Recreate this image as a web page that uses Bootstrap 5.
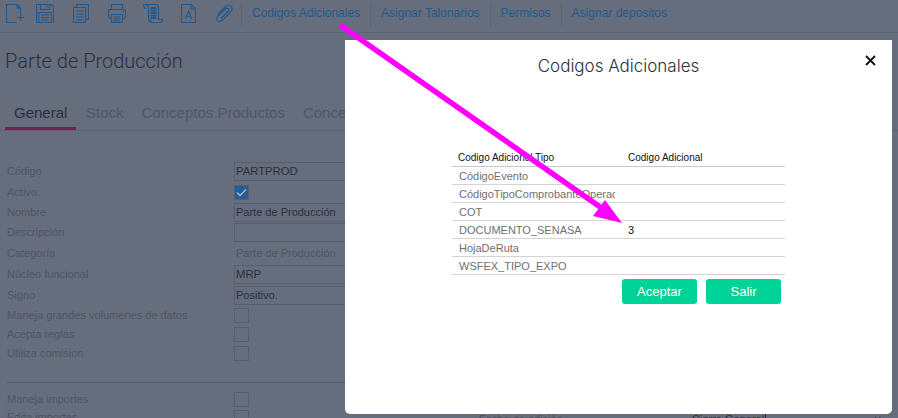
<!DOCTYPE html>
<html lang="es"><head><meta charset="utf-8">
<link href="https://cdn.jsdelivr.net/npm/bootstrap@5.3.0/dist/css/bootstrap.min.css" rel="stylesheet">
<style>
html,body{width:898px;height:418px;overflow:hidden}
body{background:#666d7c;font-family:"Liberation Sans",Arial,sans-serif;position:relative;color:#2b3040}
.topbar{height:33px;border-bottom:1px solid #5d6473;padding:3px 0 0 6px}
.ticon{height:19px;display:block;flex:none;margin-top:1px;fill:none;stroke:#20598f;stroke-width:1.1}
.ticon .hv{stroke-width:2}
.i1{width:18px}.i2{width:18px;margin-left:12px}.i3{width:16px;margin-left:19px}.i4{width:18px;margin-left:19px}
.i5{width:20px;margin-left:17px}.i6{width:15px;margin-left:18px}.i7{width:17px;margin-left:20px;margin-right:8px}
.tlink{font-size:12px;color:#235a8d;padding:0 10px;height:24px;line-height:21px;border-left:1px solid #5e6574;text-decoration:none}
.ptitle{font-family:Roboto,sans-serif;font-weight:300;font-size:20px;color:#2b3040;margin:14px 0 0 5px;line-height:28px}
.tabsbar{margin-top:27px;height:29px;border-bottom:1px solid #5d6473;padding-left:5px;font-size:15px}
.tabx{padding:0 8px 0 10px;line-height:22px;height:28px;color:#515766;white-space:nowrap}
.tabx.on{color:#2b3040;border-bottom:3px solid #7a1f4d;width:71px;padding-left:9px}
.frm{margin:30px 0 0 7px;font-size:11px;color:#4f5564;width:338px;overflow:hidden}
.frow{display:flex;align-items:center}
.h18{height:18px}.h19{height:19px}.h20{height:20px}.h21{height:21px}
.flab{width:227px;flex:none;line-height:13px}
.finp{width:120px;flex:none;height:19px;border:1px solid #575e6d;color:#2b3040;padding-left:1px;line-height:17px;white-space:nowrap}
.ftx{font-size:11.3px}
.fplain{width:120px;flex:none;padding-left:2px;line-height:17px}
.fchk{width:15px;height:15px;flex:none;border:1px solid #575e6d}
.fchk.yes{background:#235d97;display:flex;align-items:center;justify-content:center}
.frule{border-top:1px solid #555b6a;height:0;margin-top:19px;margin-bottom:7px}
.dlg{position:absolute;left:345px;top:40px;width:547px;height:374px;background:#fff;border-radius:0 0 5px 5px}
.dtitle{font-family:Inter,sans-serif;font-size:17px;font-weight:300;color:#2b3040;text-align:center;line-height:24px;margin-top:14px}
.xbtn{position:absolute;left:519px;top:14px;width:13px;height:13px;display:block}
.tblwrap{width:333px;margin:72px 0 0 107px}
.ctbl{width:333px;table-layout:fixed;border-collapse:collapse;margin:0}
.ctbl th{font-weight:400;font-size:10px;color:#111;height:16px;padding:1px 6px 0;border-bottom:1px solid #c9c9c9;white-space:nowrap;line-height:14px}
.ctbl td{height:18px;padding:1px 7px 0 7px;font-size:11px;border-bottom:1px solid #d4d4d4;color:#6f6f6f;line-height:14px}
.ctbl td.v{color:#111;padding-left:6px}
.cellclip{white-space:nowrap;overflow:hidden}
.col1{width:170px}
.acts{gap:9px;margin-top:4px;padding-right:4px}
.gbtn{width:75px;height:25px;padding:0;background:#00d398;border:0;border-radius:3px;color:#fff;font-size:13px;line-height:25px}
.gbtn:hover{background:#00d398;color:#fff}
.arw{position:absolute;left:0;top:0;width:898px;height:418px;pointer-events:none}
.underlay{position:absolute;font-size:11px;line-height:13px;color:#4a5060;white-space:nowrap;top:413px}
.ux1{left:479px}
.ux2{left:692px;color:#2b3040;padding-right:1px;border-right:1px solid #2b3040}
.ux3{left:875px;color:#2b3040}
</style></head><body>
<div class="topbar d-flex align-items-start">
 <svg class="ticon i1" viewBox="0 0 18 19"><path d="M14.500 10V4L11 .5H.5V18.500H10.500M11 .5V4H14.500M14.700 10v7M11 13.500h7"/></svg>
 <svg class="ticon i2" viewBox="0 0 18 19"><path d="M.5.5H15.500L17.500 2.500V18.500H.5zM4.500.5V5.500H14V.5M10.500 2h1.500v2M2.800 18.500V8.500H15.200V18.500M5 11h8M5 13.500h8M5 16h8"/></svg>
 <svg class="ticon i3" viewBox="0 0 16 19"><path d="M3.500 3V.5H15.500V15.500H12.500M.5 3.500H12.500V18.500H.5zM3 7h7.500M3 10h7.500M3 13h7.500M3 16h7.500"/></svg>
 <svg class="ticon i4" viewBox="0 0 18 19"><path d="M3.500 5.500V.5H14.500V5.500M3.500 14.500H1.500L.5 13.500V6.500L1.500 5.500H16.500L17.500 6.500V13.500L16.500 14.500H14.500M3.500 10.500H14.500V18.500H3.500zM5.500 13h7M5.500 15h7M5.500 17h7M14.500 7.500h1.500"/></svg>
 <svg class="ticon i5" viewBox="0 0 20 19"><path d="M.5 .5H13C15 .5 15.500 2 15.500 4V15.500H19.500C19.500 17.500 18.500 18.500 17 18.500H9.500C8 18.500 7.500 17 7.500 15.500M.5 .5C.5 3 1 4.500 3.500 4.500M3 .5C5 1 5.500 2.500 5.500 4V14C5.500 16 6 17.500 7.500 18.500"/><path class="hv" d="M7.500 4h6M7.500 6.500h6M7.500 9h6M7.500 11.500h6M7.500 14h6"/></svg>
 <svg class="ticon i6" viewBox="0 0 15 19"><path d="M.5.5H10L14.500 5V18.500H.5zM10 .5V5H14.500M4.300 15 7.500 7 10.700 15M5.500 12.500H9.500"/></svg>
 <svg class="ticon i7" viewBox="0 0 17 19"><path d="M1.500 10.500 9.500 2.500C11 1 13.500.8 15 2.200S16.500 6 15 7.500L6.500 16C5 17.500 3 18 1.700 16.800S.5 13.500 2 12L9 5C10 4 11.500 4 12.300 4.700S13 6.500 12 7.500L5 14.500"/></svg>
 <a class="tlink" href="#">Codigos Adicionales</a>
 <a class="tlink" href="#">Asignar Talonarios</a>
 <a class="tlink" href="#">Permisos</a>
 <a class="tlink" href="#">Asignar depositos</a>
</div>
<h1 class="ptitle">Parte de Producción</h1>
<div class="tabsbar d-flex">
 <div class="tabx on">General</div><div class="tabx">Stock</div><div class="tabx">Conceptos Productos</div><div class="tabx">Conceptos</div>
</div>
<div class="frm">
 <div class="frow h21"><div class="flab">Código</div><div class="finp ftx">PARTPROD</div></div>
 <div class="frow h20"><div class="flab">Activo</div><div class="fchk yes"><svg width="11" height="9" viewBox="0 0 11 9"><path d="M1 4.500 4 7.500 10 1.500" fill="none" stroke="#aab7cc" stroke-width="1.500"/></svg></div></div>
 <div class="frow h20"><div class="flab">Nombre</div><div class="finp">Parte de Producción</div></div>
 <div class="frow h21"><div class="flab">Descripción</div><div class="finp"></div></div>
 <div class="frow h21"><div class="flab">Categoría</div><div class="fplain">Parte de Producción</div></div>
 <div class="frow h21"><div class="flab">Núcleo funcional</div><div class="finp ftx">MRP</div></div>
 <div class="frow h21"><div class="flab">Signo</div><div class="finp">Positivo.</div></div>
 <div class="frow h19"><div class="flab">Maneja grandes volumenes de datos</div><div class="fchk"></div></div>
 <div class="frow h19"><div class="flab">Acepta reglas</div><div class="fchk"></div></div>
 <div class="frow h19"><div class="flab">Utiliza comision</div><div class="fchk"></div></div>
 <div class="frule"></div>
 <div class="frow h18"><div class="flab">Maneja importes</div><div class="fchk"></div></div>
 <div class="frow h18"><div class="flab">Edita importes</div><div class="fchk"></div></div>
</div>
<div class="underlay ux1">Fecha de edición</div>
<div class="underlay ux2">Cierre General</div>
<div class="underlay ux3">v</div>
<div class="dlg">
 <div class="dtitle">Codigos Adicionales</div>
 <svg class="xbtn" viewBox="0 0 13 13"><path d="M2 2 11 11M11 2 2 11" stroke="#111" stroke-width="1.800" fill="none"/></svg>
 <div class="tblwrap">
  <table class="ctbl"><colgroup><col class="col1"><col></colgroup>
   <thead><tr><th>Codigo Adicional Tipo</th><th>Codigo Adicional</th></tr></thead>
   <tbody>
    <tr><td><div class="cellclip">CódigoEvento</div></td><td class="v"></td></tr>
    <tr><td><div class="cellclip">CódigoTipoComprobanteOperacion</div></td><td class="v"></td></tr>
    <tr><td><div class="cellclip">COT</div></td><td class="v"></td></tr>
    <tr><td><div class="cellclip">DOCUMENTO_SENASA</div></td><td class="v">3</td></tr>
    <tr><td><div class="cellclip">HojaDeRuta</div></td><td class="v"></td></tr>
    <tr><td><div class="cellclip">WSFEX_TIPO_EXPO</div></td><td class="v"></td></tr>
   </tbody>
  </table>
  <div class="d-flex justify-content-end acts"><button class="btn gbtn">Aceptar</button><button class="btn gbtn">Salir</button></div>
 </div>
</div>
<svg class="arw" viewBox="0 0 898 418"><path d="M340 25 603 209" stroke="#ff00ff" stroke-width="5.500" fill="none"/><path d="M622 223 593 216 605 200z" fill="#ff00ff"/></svg>
</body></html>
